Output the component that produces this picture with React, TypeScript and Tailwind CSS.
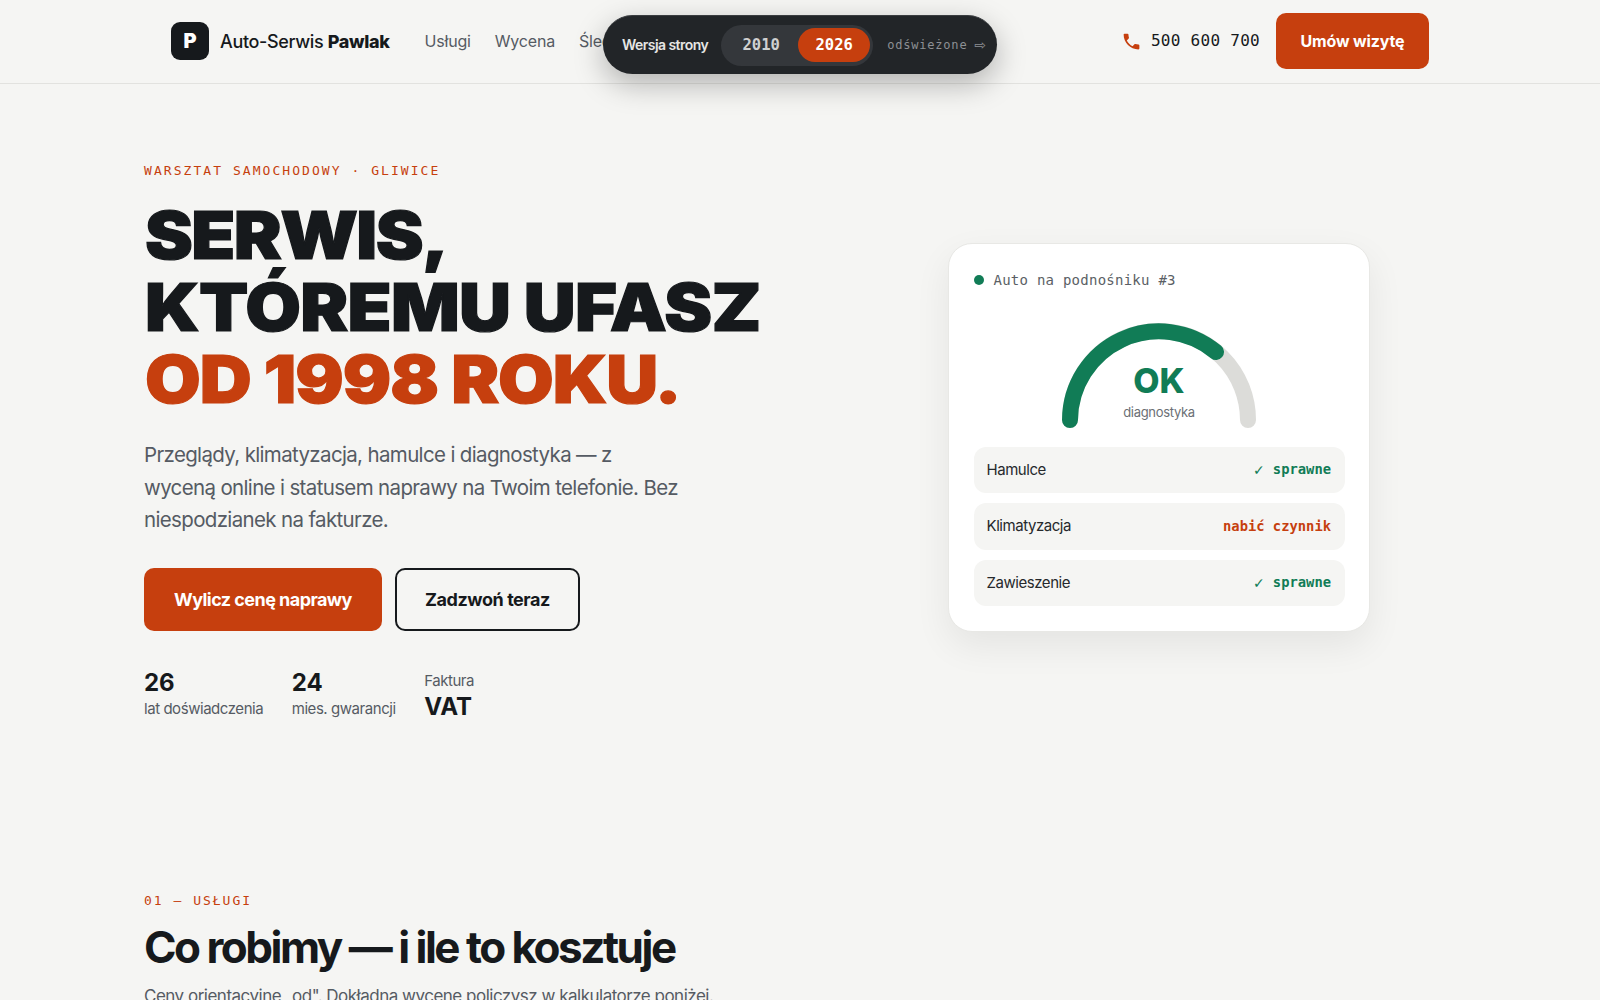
import { MdPhone } from "react-icons/md";

const sans = "font-['Inter','Noto_Sans',sans-serif]";
const mono = "font-['DejaVu_Sans_Mono','Liberation_Mono',monospace]";

function Header() {
  return (
    <header className="h-[84px] border-b border-[#e2e2df]">
      <div className="mx-auto flex h-full w-[1258px] items-center justify-between pb-[2px]">
        <div className="flex items-center">
          <div className="flex h-[38px] w-[38px] items-center justify-center rounded-[9px] bg-[#16191c] pt-[1px] text-[20px] font-black text-white">
            P
          </div>
          <div className="ml-[11px] pt-[1px] text-[18px] font-medium tracking-[-0.35px] text-[#16191c]">
            Auto-Serwis <span className="font-extrabold">Pawlak</span>
          </div>
          <nav className="ml-[35px] flex gap-[24px] pt-[1px] text-[16px] tracking-[-0.2px] text-[#555b63]">
            <span>Usługi</span>
            <span>Wycena</span>
            <span>Śledź</span>
          </nav>
        </div>
        <div className="flex items-center">
          <MdPhone size={21} className="mt-[1px] text-[#c63f0e]" />
          <span className={`${mono} ml-[9px] mt-[1px] text-[16px] tracking-[0.28px] text-[#16191c]`}>500 600 700</span>
          <button className="ml-[16px] h-[56px] w-[153px] rounded-[10px] bg-[#c63f0e] text-[16px] font-bold tracking-[-0.15px] text-white">
            Umów wizytę
          </button>
        </div>
      </div>
    </header>
  );
}

function VersionPill() {
  return (
    <div className="absolute left-[603px] top-[15px] flex h-[59px] w-[394px] items-center rounded-full border-t border-[#3a3d40] bg-[#222528] pl-[19px] shadow-[0_10px_30px_rgba(0,0,0,0.28)]">
      <span className="mb-[1px] text-[14px] font-semibold tracking-[-0.55px] text-[#e6e6e4]">Wersja strony</span>
      <div className={`${mono} ml-[13px] flex h-[41px] w-[152px] items-center rounded-full bg-[#34373b] pr-[3px] text-[15.5px] font-bold`}>
        <span className="flex-1 pl-[3px] pt-[1px] text-center text-[#cfd0d0]">2010</span>
        <span className="flex h-[34px] w-[72px] items-center justify-center rounded-full bg-[#c63f0e] pt-[1px] text-white">2026</span>
      </div>
      <span className={`${mono} ml-[14px] flex items-center whitespace-nowrap text-[12px] tracking-[0.8px] text-[#8d9094]`}>
        odświeżone<span className="ml-[7px] font-['DejaVu_Sans',sans-serif] text-[14px] leading-none">⇨</span>
      </span>
    </div>
  );
}

function Stat({ top, bottom }: { top: string; bottom: string }) {
  return (
    <div>
      <div className="text-[24px] font-bold leading-[28px] text-[#16191c]">{top}</div>
      <div className="mt-[1px] text-[15px] leading-[22px] tracking-[-0.45px] text-[#555b63]">{bottom}</div>
    </div>
  );
}

function HeroText() {
  return (
    <div>
      <div className={`${mono} text-[13px] leading-[18px] tracking-[2.05px] text-[#c63f0e]`}>WARSZTAT SAMOCHODOWY · GLIWICE</div>
      <h1 className="ml-[1px] mt-[19px] origin-left scale-x-[1.09] whitespace-nowrap text-[66px] font-black leading-[72px] tracking-[-0.65px] text-[#16191c] [-webkit-text-stroke:1.2px_currentColor]">
        <span className="tracking-[-1.5px]">SERWIS,</span>
        <br />
        KTÓREMU UFASZ
        <br />
        <span className="tracking-[-1px] text-[#c63f0e]">OD 1998 ROKU.</span>
      </h1>
      <p className="mt-[24px] w-[540px] text-[20.5px] leading-[32.5px] tracking-[-0.65px] text-[#555b63]">
        Przeglądy, klimatyzacja, hamulce i diagnostyka — z wyceną online i statusem naprawy na Twoim telefonie. Bez niespodzianek na fakturze.
      </p>
      <div className="mt-[31px] flex gap-[13px]">
        <button className="h-[63px] w-[238px] rounded-[10px] bg-[#c63f0e] text-[18px] font-bold tracking-[-0.55px] text-white">
          Wylicz cenę naprawy
        </button>
        <button className="h-[63px] w-[185px] rounded-[10px] border-2 border-[#16191c] text-[18px] font-bold tracking-[-0.45px] text-[#16191c]">
          Zadzwoń teraz
        </button>
      </div>
      <div className="mt-[38px] flex gap-[28.5px]">
        <Stat top="26" bottom="lat doświadczenia" />
        <Stat top="24" bottom="mies. gwarancji" />
        <div className="pt-[1px]">
          <div className="text-[15px] leading-[22px] tracking-[-0.45px] text-[#555b63]">Faktura</div>
          <div className="mt-[1px] text-[24px] font-bold leading-[28px] text-[#16191c]">VAT</div>
        </div>
      </div>
    </div>
  );
}

function StatusRow({ name, value, ok }: { name: string; value: string; ok?: boolean }) {
  return (
    <div className="flex h-[46.5px] items-center justify-between rounded-[12px] bg-[#f5f5f3] pl-[13px] pr-[13.5px]">
      <span className="text-[15px] tracking-[-0.45px] text-[#26292c]">{name}</span>
      <span className={`${mono} flex items-center text-[13.8px] font-bold ${ok ? "text-[#117c56]" : "text-[#c63f0e]"}`}>
        {ok && <span className="mr-[8px] font-['DejaVu_Sans',sans-serif] text-[14px] font-normal leading-none">✓</span>}
        {value}
      </span>
    </div>
  );
}

function Card() {
  return (
    <div className="mb-[8px] w-[422px] rounded-[24px] border border-[#e8e8e5] bg-white px-[24.5px] pb-[25px] pt-[26px] shadow-[0_14px_36px_rgba(0,0,0,0.07)]">
      <div className="flex h-[21px] items-center">
        <span className="h-[10px] w-[10px] rounded-full bg-[#117c56]" />
        <span className={`${mono} ml-[10px] text-[14px] tracking-[0.25px] text-[#5b5f65]`}>Auto na podnośniku #3</span>
      </div>
      <div className="relative mx-auto mt-[31px] h-[114px] w-[194px]">
        <svg width="194" height="114" viewBox="0 0 194 114" fill="none">
          <path d="M8 98 A 89 89 0 0 1 186 98" stroke="#dcdcd9" strokeWidth="16" strokeLinecap="round" />
          <path d="M8 98 A 89 89 0 0 1 154 30" stroke="#117c56" strokeWidth="16" strokeLinecap="round" />
        </svg>
        <div className="absolute inset-x-0 top-[39px] text-center">
          <div className="text-[34px] font-extrabold leading-[40px] text-[#117c56]">OK</div>
          <div className="mt-[1px] text-[13px] leading-[20px] tracking-[-0.3px] text-[#6b6f75]">diagnostyka</div>
        </div>
      </div>
      <div className="mt-[11px] flex flex-col gap-[10px]">
        <StatusRow name="Hamulce" value="sprawne" ok />
        <StatusRow name="Klimatyzacja" value="nabić czynnik" />
        <StatusRow name="Zawieszenie" value="sprawne" ok />
      </div>
    </div>
  );
}

function Services() {
  return (
    <section className="mt-[171px] pl-[144px]">
      <div className={`${mono} text-[13px] leading-[18px] tracking-[2px] text-[#c63f0e]`}>01 — USŁUGI</div>
      <h2 className="mt-[9px] text-[44px] font-bold leading-[56px] tracking-[-2.5px] text-[#16191c]">Co robimy — i ile to kosztuje</h2>
      <p className="mt-[7px] text-[17px] leading-[28px] tracking-[-0.5px] text-[#555b63]">
        Ceny orientacyjne „od". Dokładną wycenę policzysz w kalkulatorze poniżej.
      </p>
    </section>
  );
}

export default function App() {
  return (
    <div className={`${sans} relative h-screen overflow-hidden bg-[#f5f5f3]`}>
      <Header />
      <VersionPill />
      <main>
        <div className="flex items-center justify-between pl-[144px] pr-[230px] pt-[78px]">
          <HeroText />
          <Card />
        </div>
        <Services />
      </main>
    </div>
  );
}
